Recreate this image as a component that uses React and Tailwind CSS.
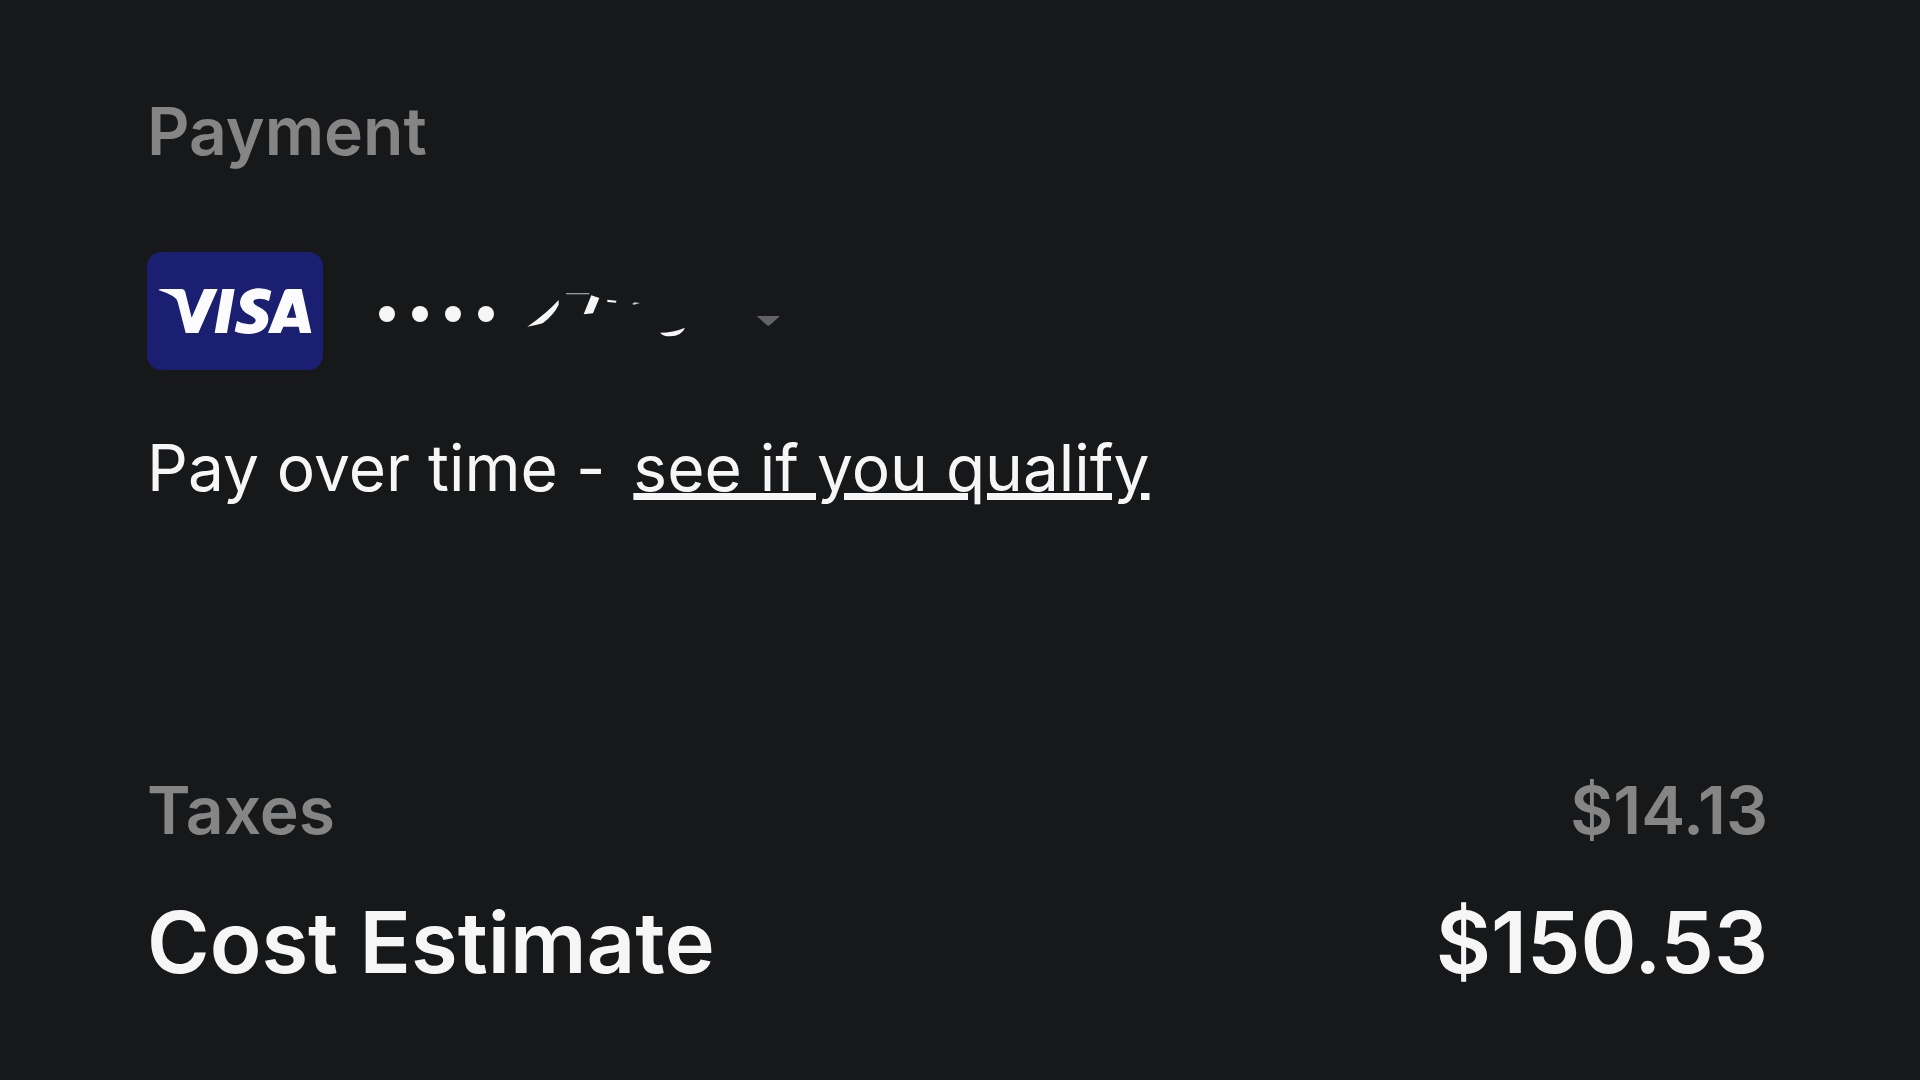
const VISA_BLUE = "#1a1f71";

function VisaCard() {
  return (
    <svg className="h-[118px] w-[176px] shrink-0" viewBox="50 35 528 354" role="img" aria-label="Visa">
      <rect x="50" y="35" width="528" height="354" rx="44" fill={VISA_BLUE} />
      <g fill="#fcfcff">
        <path d="M84 149 Q86 146 96 146 H153 Q162 146 165 156 L184 232 L221 146 H262 L204 278 H166 L142 184 Q138 174 128 168 Q108 156 84 149 Z" />
        <path d="M276 146 H313 L290 278 H253 Z" />
        <path d="M423 152 L416 182 Q401 175 387 175 Q371 175 369 184 Q368 191 386 200 Q415 213 414 236 C413 266 387 281 355 281 Q330 281 313 273 L320 242 Q338 252 356 252 Q374 252 376 241 Q377 234 359 225 Q329 210 329 187 C331 159 356 144 387 144 Q408 144 423 152 Z" />
        <path fillRule="evenodd" d="M472 146 H514 L543 278 H509 L505 259 H459 L451 278 H413 L461 155 Q464 146 472 146 Z M487 187 L469 232 H498 Z" />
      </g>
    </svg>
  );
}

function MaskedNumber() {
  return (
    <svg className="h-[60px] w-[300px]" viewBox="0 0 900 180" aria-hidden="true">
      <g transform="translate(0 -42)">
        <g fill="#f6f6f7">
          <path d="M82 170 Q140 130 176 90 V104 Q162 134 128 160 Q110 166 82 170 Z" />
          <path d="M274 76 L298 84 L279 130 L251 133 Z" />
          <path d="M322 89 L349 92 L348 98 L322 96 Z" />
          <path d="M396 102 L404 97 L420 99 L402 104 Z" opacity=".8" />
          <path d="M480 188 Q520 188 555 173 Q545 198 510 199 Q488 199 480 188 Z" />
        </g>
        <path d="M198 71 H268" stroke="#9a9a9c" strokeWidth="4" />
        <path d="M770 138 H840 L810 165 Q805 169 800 165 Z" fill="#636365" />
      </g>
    </svg>
  );
}

function Dots() {
  return (
    <span className="flex gap-[17px]">
      {[0, 1, 2, 3].map((i) => (
        <span key={i} className="size-4 rounded-full bg-[#f6f6f7]" />
      ))}
    </span>
  );
}

export default function App() {
  return (
    <main className="min-h-screen bg-[#17181a] pt-[91px] pr-[152px] pb-16 pl-[147px] font-['Inter',sans-serif] text-[66px] leading-[80px] text-[#f6f6f7]">
      <section>
        <h2 className="font-semibold text-[#858586]">Payment</h2>
        <button type="button" aria-label="Change card, Visa" className="mt-[81px] flex items-center">
          <VisaCard />
          <span className="ml-14 flex items-center gap-[6px] pt-[6px]">
            <Dots />
            <MaskedNumber />
          </span>
        </button>
        <p className="mt-[58px] text-[64px]">
          Pay over time -{" "}
          <a href="#qualify" className="ml-[10px] underline decoration-[7px] underline-offset-[2px]">
            see if you qualify
          </a>
        </p>
      </section>
      <dl className="mt-[262px]">
        <div className="flex justify-between font-semibold text-[#858586]">
          <dt>Taxes</dt>
          <dd>$14.13</dd>
        </div>
        <div className="mt-[43px] flex justify-between text-[85px] leading-[100px] font-semibold">
          <dt>Cost Estimate</dt>
          <dd>$150.53</dd>
        </div>
      </dl>
    </main>
  );
}
